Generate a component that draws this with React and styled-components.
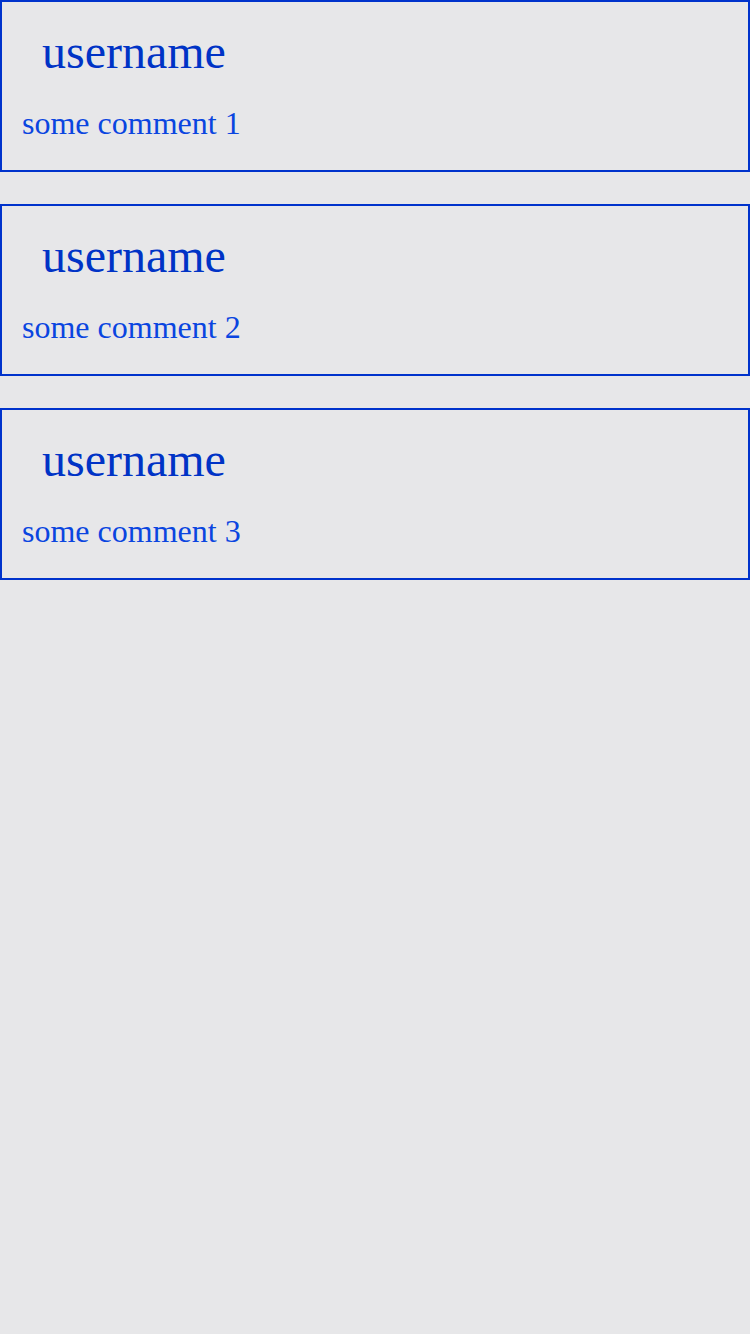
import React from "react";
import styled, { createGlobalStyle } from "styled-components";

const GlobalStyle = createGlobalStyle`
  html, body {
    margin: 0;
    padding: 0;
    background-color: #e7e7e9;
    font-family: "Liberation Serif", "Times New Roman", serif;
  }
`;

const List = styled.div`
  display: flex;
  flex-direction: column;
  gap: 32px;
  min-height: 1334px;
  background-color: #e7e7e9;
`;

const Card = styled.div`
  border: 2px solid #0033cc;
  padding: 22px 20px 28px;
  display: flex;
  flex-direction: column;
  gap: 26px;
`;

const Username = styled.h2`
  margin: 0;
  padding-left: 20px;
  font-size: 48px;
  font-weight: 400;
  line-height: 55px;
  color: #0033c6;
`;

const Comment = styled.p`
  margin: 0;
  font-size: 32px;
  line-height: 37px;
  color: #0a45e0;
`;

const comments = ["some comment 1", "some comment 2", "some comment 3"];

const App = () => {
  return (
    <>
      <GlobalStyle />
      <List>
        {comments.map((text) => (
          <Card key={text}>
            <Username>username</Username>
            <Comment>{text}</Comment>
          </Card>
        ))}
      </List>
    </>
  );
};

export default App;
